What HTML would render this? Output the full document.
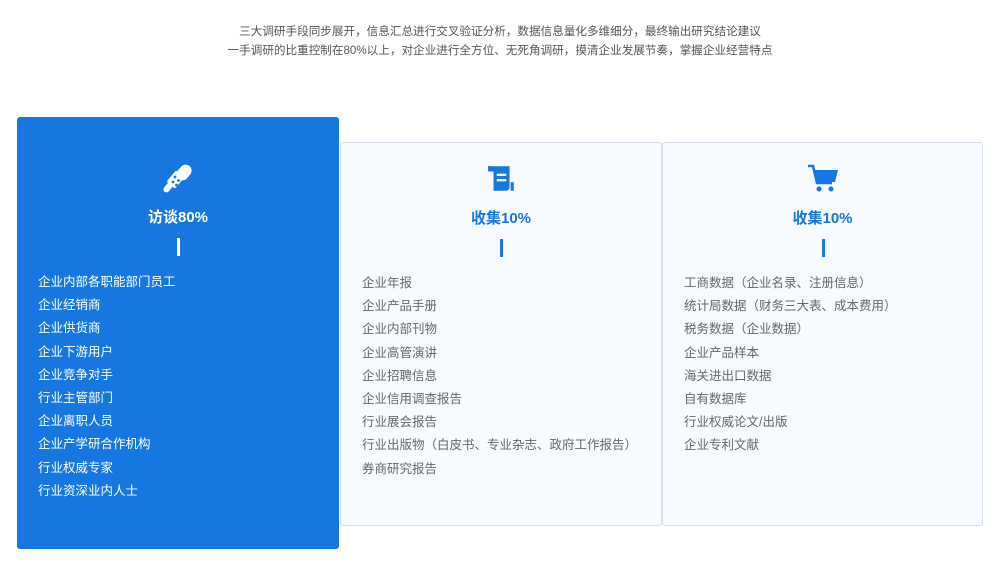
<!DOCTYPE html>
<html><head><meta charset="utf-8"><style>
body{margin:0;width:1000px;height:561px;background:#fff;font-family:"Liberation Sans","Noto Sans CJK SC",sans-serif;position:relative;overflow:hidden}
.top{position:absolute;top:22px;left:0;width:1000px;text-align:center;font-size:11.6px;color:#555;line-height:19px}
.card{position:absolute;box-sizing:border-box}
.c1{left:17px;top:117px;width:322px;height:432px;background:#1677e0;border-radius:3px;color:#fff}
.c2{left:340px;top:142px;width:322px;height:384px;background:#f7fbff;border:1px solid #d6e0ea;border-radius:3px}
.c3{left:662px;top:142px;width:321px;height:384px;background:#f7fbff;border:1px solid #d6e0ea;border-radius:3px}
.icon{position:absolute;left:50%;transform:translateX(-50%)}
.title{position:absolute;width:100%;text-align:center;font-size:15px;font-weight:bold}
.bar{position:absolute;left:50%;width:3px;height:18px;margin-left:-1px}
ul{position:absolute;left:21px;margin:0;padding:0;list-style:none;font-size:12.5px;line-height:23.2px}
.c2 ul,.c3 ul{color:#666}
.c2 .title,.c3 .title{color:#1677e0}
</style></head><body>
<div class="top">三大调研手段同步展开，信息汇总进行交叉验证分析，数据信息量化多维细分，最终输出研究结论建议<br>一手调研的比重控制在80%以上，对企业进行全方位、无死角调研，摸清企业发展节奏，掌握企业经营特点</div>
<div class="card c1">
<svg class="icon" style="top:46px" width="32" height="32" viewBox="0 0 32 32"><rect x="16" y="1" width="12" height="17" rx="6" transform="rotate(40 22 9.5)" fill="#fff"/><rect x="8" y="9" width="11" height="15" rx="2" transform="rotate(40 13.5 16.5)" fill="#fff"/><rect x="3" y="19" width="6" height="11" rx="3" transform="rotate(40 6 24.5)" fill="#fff"/><circle cx="13" cy="14" r="1.4" fill="#1677e0"/><circle cx="16.5" cy="17.5" r="1.4" fill="#1677e0"/><circle cx="11" cy="19" r="1.4" fill="#1677e0"/><circle cx="14.5" cy="22" r="1.4" fill="#1677e0"/></svg>
<div class="title" style="top:89px">访谈80%</div>
<div class="bar" style="top:121px;background:#fff"></div>
<ul style="top:154px"><li>企业内部各职能部门员工</li><li>企业经销商</li><li>企业供货商</li><li>企业下游用户</li><li>企业竞争对手</li><li>行业主管部门</li><li>企业离职人员</li><li>企业产学研合作机构</li><li>行业权威专家</li><li>行业资深业内人士</li></ul>
</div>
<div class="card c2">
<svg class="icon" style="top:20px" width="32" height="32" viewBox="0 0 30 30"><path d="M3 3h20v20a3 3 0 0 1-3 3H8V8H3z" fill="#1677e0"/><path d="M3 3a4 4 0 0 1 5 3v2H3z" fill="#1677e0"/><rect x="11" y="10" width="9" height="2.2" fill="#f7fbff"/><rect x="11" y="15" width="9" height="2.2" fill="#f7fbff"/><rect x="24" y="18" width="3" height="8" fill="#1677e0"/></svg>
<div class="title" style="top:64px">收集10%</div>
<div class="bar" style="top:96px;background:#1677e0"></div>
<ul style="top:129px"><li>企业年报</li><li>企业产品手册</li><li>企业内部刊物</li><li>企业高管演讲</li><li>企业招聘信息</li><li>企业信用调查报告</li><li>行业展会报告</li><li>行业出版物（白皮书、专业杂志、政府工作报告）</li><li>券商研究报告</li></ul>
</div>
<div class="card c3">
<svg class="icon" style="top:20px" width="32" height="32" viewBox="0 0 32 32"><path d="M1 3h5l4 17h15" fill="none" stroke="#1677e0" stroke-width="2.5"/><path d="M7 7h24l-3 12H10z" fill="#1677e0"/><circle cx="12" cy="26" r="2.5" fill="#1677e0"/><circle cx="24" cy="26" r="2.5" fill="#1677e0"/></svg>
<div class="title" style="top:64px">收集10%</div>
<div class="bar" style="top:96px;background:#1677e0"></div>
<ul style="top:129px"><li>工商数据（企业名录、注册信息）</li><li>统计局数据（财务三大表、成本费用）</li><li>税务数据（企业数据）</li><li>企业产品样本</li><li>海关进出口数据</li><li>自有数据库</li><li>行业权威论文/出版</li><li>企业专利文献</li></ul>
</div>
</body></html>
